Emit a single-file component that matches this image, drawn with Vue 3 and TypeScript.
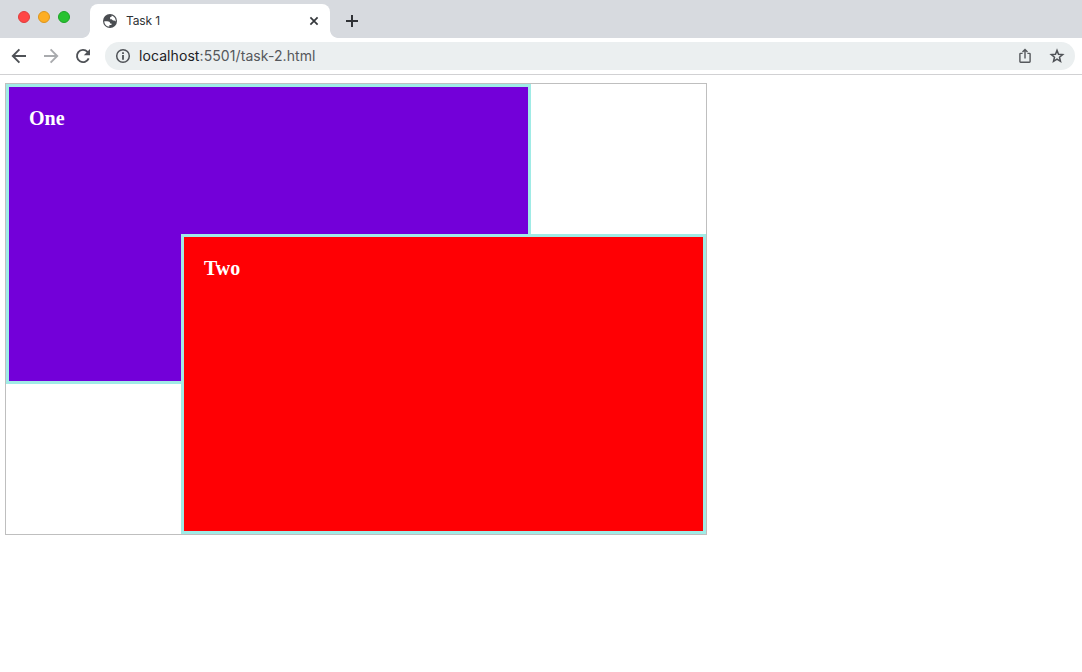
<script setup lang="ts">
interface Panel {
  name: string
  label: string
}

const lights: string[] = ['close', 'minimize', 'zoom']
const panels: Panel[] = [
  { name: 'one', label: 'One' },
  { name: 'two', label: 'Two' },
]
</script>

<template>
  <div class="browser">
    <header class="tab-strip">
      <div class="lights">
        <span v-for="light in lights" :key="light" class="light" :class="light"></span>
      </div>
      <div class="tab">
        <svg class="globe" width="16" height="16" viewBox="0 0 16 16">
          <circle cx="8" cy="8" r="7" fill="#4a4d51" />
          <path
            d="M2.3 8.2H5.2C7.1 8.2 8.1 9.1 8.2 10.5H9.5V12.1H7.4V13.5C4.5 13.5 2.2 11.1 2.3 8.2ZM9.7 2.6V3.6L8.1 4.3V6.2H9.6L11 7.6H12.4L13.7 8.5V7.4C13.4 5 11.8 3.2 9.7 2.6Z"
            fill="#fff"
          />
        </svg>
        <span class="title">Task 1</span>
        <svg class="tab-close" width="10" height="10" viewBox="0 0 10 10">
          <path d="M1.4 1.4L8.6 8.6M8.6 1.4L1.4 8.6" stroke="#35383c" stroke-width="1.7" />
        </svg>
      </div>
      <svg class="new-tab" width="12" height="12" viewBox="0 0 12 12">
        <path d="M6 0V12M0 6H12" stroke="#303236" stroke-width="2" />
      </svg>
    </header>

    <nav class="toolbar">
      <svg class="tool" width="16" height="16" viewBox="0 0 16 16">
        <path d="M15 8H2M8.4 1.4L1.8 8L8.4 14.6" fill="none" stroke="#4f5257" stroke-width="1.9" />
      </svg>
      <svg class="tool" width="16" height="16" viewBox="0 0 16 16">
        <path d="M1 8H14M7.6 1.4L14.2 8L7.6 14.6" fill="none" stroke="#a9abae" stroke-width="1.9" />
      </svg>
      <svg class="tool" width="16" height="16" viewBox="0 0 16 16">
        <path d="M13.7 10.4A6.1 6.1 0 1 1 12.5 3.8L13.2 4.6" fill="none" stroke="#4f5257" stroke-width="1.9" />
        <path d="M15 1V7.2H8.8Z" fill="#4f5257" />
      </svg>
      <div class="address">
        <svg width="16" height="16" viewBox="0 0 16 16">
          <circle cx="8" cy="8" r="6.3" fill="none" stroke="#4f5257" stroke-width="1.5" />
          <path d="M8 4.3V6M8 7.1V11.7" stroke="#4f5257" stroke-width="1.8" />
        </svg>
        <span class="url"><b>localhost</b>:5501/task-2.html</span>
        <svg class="share" width="14" height="16" viewBox="0 0 14 16">
          <path
            d="M4.6 5.4H2.6Q1.9 5.4 1.9 6.1V13.6Q1.9 14.3 2.6 14.3H11.4Q12.1 14.3 12.1 13.6V6.1Q12.1 5.4 11.4 5.4H9.4M7 10.5V1.8M4.5 4.1L7 1.6L9.5 4.1"
            fill="none"
            stroke="#55585c"
            stroke-width="1.4"
          />
        </svg>
        <svg class="star" width="16" height="16" viewBox="0 0 16 16">
          <path
            d="M8 2.4L9.5 6.2L13.7 6.5L10.5 9.2L11.5 13.3L8 11.1L4.5 13.3L5.5 9.2L2.3 6.5L6.5 6.2Z"
            fill="none"
            stroke="#4f5257"
            stroke-width="1.5"
          />
        </svg>
      </div>
    </nav>

    <main class="page">
      <div class="grid">
        <section v-for="panel in panels" :key="panel.name" class="panel" :class="panel.name">
          {{ panel.label }}
        </section>
      </div>
    </main>
  </div>
</template>

<style>
body {
  margin: 0;
  background: #fff;
}
</style>

<style scoped>
.browser {
  height: 672px;
  overflow: hidden;
  background: #fff;
  font-family: Inter, 'Liberation Sans', sans-serif;
}
svg {
  display: block;
  flex: none;
}
.tab-strip {
  display: flex;
  align-items: flex-start;
  height: 38px;
  background: #d7dadf;
}
.lights {
  display: flex;
  gap: 8px;
  width: 72px;
  padding: 11px 0 0 18px;
}
.light {
  box-sizing: border-box;
  width: 12px;
  height: 12px;
  border: 1px solid;
  border-radius: 50%;
}
.close {
  background: #ff4645;
  border-color: #df3d3d;
}
.minimize {
  background: #fdae24;
  border-color: #dc951d;
}
.zoom {
  background: #28c231;
  border-color: #1ca326;
}
.tab {
  position: relative;
  box-sizing: border-box;
  display: flex;
  align-items: center;
  width: 240px;
  height: 34px;
  margin-top: 4px;
  padding: 0 11px 0 12px;
  border-radius: 8px 8px 0 0;
  background: #fff;
}
.tab::before,
.tab::after {
  content: '';
  position: absolute;
  bottom: 0;
  width: 8px;
  height: 8px;
}
.tab::before {
  left: -8px;
  background: radial-gradient(circle at 0 0, transparent 7.5px, #fff 8.2px);
}
.tab::after {
  right: -8px;
  background: radial-gradient(circle at 100% 0, transparent 7.5px, #fff 8.2px);
}
.title {
  flex: 1;
  margin-left: 8px;
  font-size: 12px;
  line-height: 16px;
  letter-spacing: -0.15px;
  color: #303236;
}
.new-tab {
  margin: 15px 0 0 16px;
}
.toolbar {
  box-sizing: border-box;
  display: flex;
  align-items: center;
  height: 37px;
  padding: 0 7px 0 11px;
  border-bottom: 1px solid #d1d1d3;
  background: #fff;
}
.tool {
  margin-right: 16px;
}
.address {
  box-sizing: border-box;
  display: flex;
  align-items: center;
  flex: 1;
  height: 28px;
  margin-left: -2px;
  padding: 0 10px;
  border-radius: 14px;
  background: #ebeff0;
}
.url {
  flex: 1;
  margin-left: 8px;
  font-size: 14px;
  line-height: 20px;
  letter-spacing: 0.08px;
  color: #55585c;
}
.url b {
  font-weight: 400;
  color: #202124;
}
.share {
  margin-right: 17px;
}
.page {
  padding: 8px 5px;
}
.grid {
  display: grid;
  grid-template-columns: repeat(4, 175px);
  grid-template-rows: repeat(3, 150px);
  width: 700px;
  border: 1px solid #bfbfbf;
}
.panel {
  box-sizing: border-box;
  padding: 20px;
  border: 3px solid #a0ebe6;
  font: bold 20px/23px 'Liberation Serif', serif;
  color: #fff;
}
.one {
  grid-area: 1 / 1 / 3 / 4;
  background: #7300d9;
}
.two {
  grid-area: 2 / 2 / 4 / 5;
  background: #ff0004;
}
</style>
